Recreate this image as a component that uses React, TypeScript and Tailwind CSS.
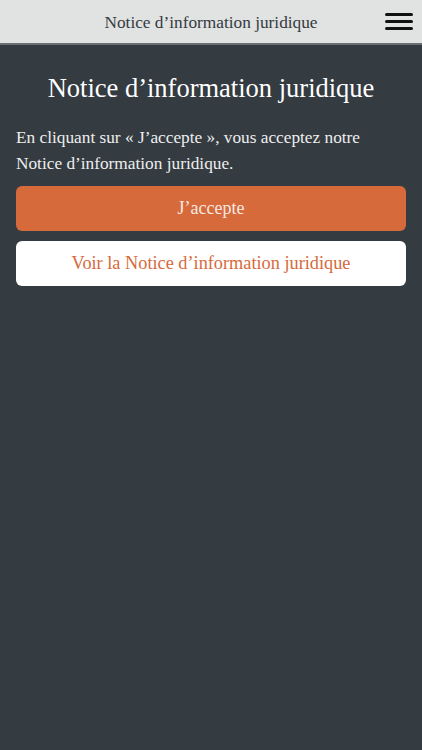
import React from 'react'

export default function App(): React.ReactElement {
    return (
        <div className="flex flex-col w-full min-h-[750px] bg-[#343b41] font-['Liberation_Serif',serif]">
            <div className="relative flex items-center justify-center h-[45px] bg-[#e1e2e2] border-b-2 border-b-[#6b7074]">
                <span className="text-[17.3px] text-[#343b41] translate-y-[1px]">Notice d’information juridique</span>
                <div className="absolute right-[9px] top-[13px] flex flex-col gap-[4px]">
                    <span className="block w-[28px] h-[3px] bg-[#111] rounded-full"/>
                    <span className="block w-[28px] h-[3px] bg-[#111] rounded-full"/>
                    <span className="block w-[28px] h-[3px] bg-[#111] rounded-full"/>
                </div>
            </div>
            <div className="flex flex-col px-4 pt-[26px]">
                <h1 className="text-center text-[26.5px] leading-[34px] text-white">Notice d’information juridique</h1>
                <p className="mt-[20px] text-[17.3px] leading-[26px] text-[#eeeeee]">
                    En cliquant sur « J’accepte », vous acceptez notre Notice d’information juridique.
                </p>
                <button className="mt-[9px] h-[45px] rounded-[6px] bg-[#d66a3b] text-[18px] text-[#f7e9e2]">
                    J’accepte
                </button>
                <button className="mt-[10px] h-[45px] rounded-[6px] bg-white text-[18.3px] text-[#d66a3b]">
                    Voir la Notice d’information juridique
                </button>
            </div>
        </div>
    )
}
